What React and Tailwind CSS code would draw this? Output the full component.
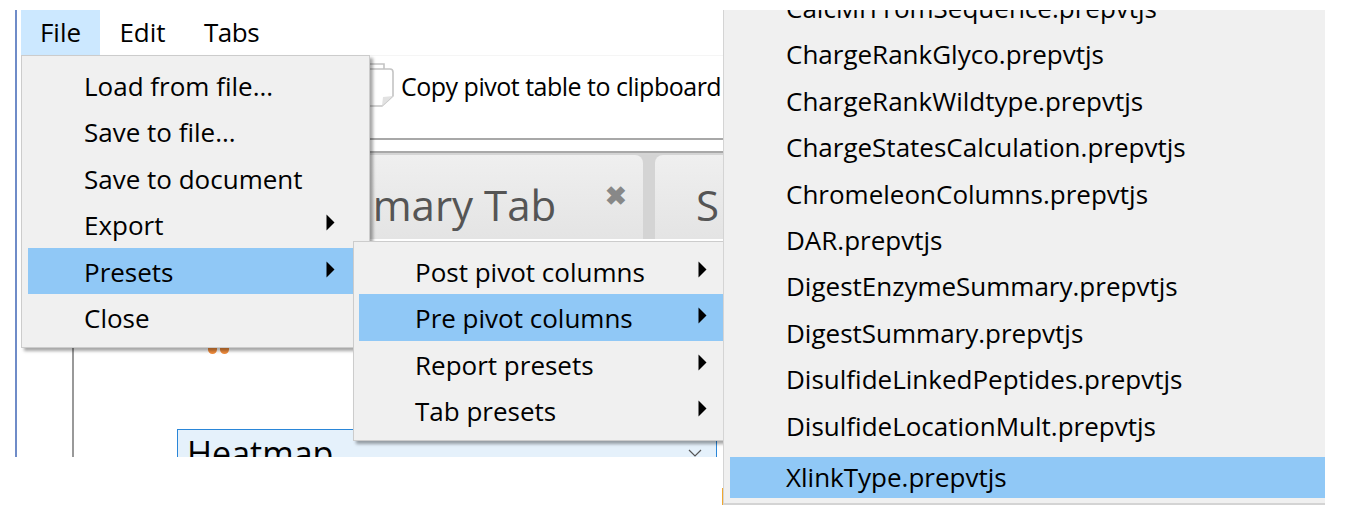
import React from "react";

const menuFont = "font-['Open_Sans',sans-serif]";

const Arrow = ({ right }) => (
  <svg width="9" height="17" viewBox="0 0 9 17" className={`absolute top-[13px] ${right}`}>
    <path d="M0.5 0.5L8.5 8.5L0.5 16.5Z" fill="#000" />
  </svg>
);

const fileItems = [
  { label: "Load from file..." },
  { label: "Save to file..." },
  { label: "Save to document" },
  { label: "Export", arrow: true },
  { label: "Presets", arrow: true, active: true },
  { label: "Close" },
];

const presetItems = [
  { label: "Post pivot columns", arrow: true },
  { label: "Pre pivot columns", arrow: true, active: true },
  { label: "Report presets", arrow: true },
  { label: "Tab presets", arrow: true },
];

const files = [
  "ChargeRankGlyco.prepvtjs",
  "ChargeRankWildtype.prepvtjs",
  "ChargeStatesCalculation.prepvtjs",
  "ChromeleonColumns.prepvtjs",
  "DAR.prepvtjs",
  "DigestEnzymeSummary.prepvtjs",
  "DigestSummary.prepvtjs",
  "DisulfideLinkedPeptides.prepvtjs",
  "DisulfideLocationMult.prepvtjs",
];

const MenuRow = ({ label, arrow, active, pad, arrowRight }) => (
  <div
    className={`relative h-[46.4px] leading-[49px] text-[26px] text-black whitespace-nowrap ${pad} ${
      active ? "bg-[#90c8f6]" : ""
    }`}
  >
    {label}
    {arrow && <Arrow right={arrowRight} />}
  </div>
);

const App = () => {
  return (
    <div className={`relative w-[1346px] h-[516px] bg-white pt-[10px] overflow-hidden ${menuFont}`}>
      <div className="ml-[15px] w-[708px] h-[447px] border-l-2 border-[#6f8cc8] overflow-hidden flex flex-col">
        {/* menu bar */}
        <div className="h-[45px] flex shrink-0 pl-[4px] text-[26px] text-black leading-[45px]">
          <div className="w-[79px] text-center bg-[#cce8ff]">File</div>
          <div className="w-[85px] text-center">Edit</div>
          <div className="w-[93px] text-center tracking-[-0.5px]">Tabs</div>
        </div>

        {/* toolbar */}
        <div className="h-[85px] ml-[56px] shrink-0 border-t border-[#f5f5f5] border-b-2 border-b-[#a8a8a8] flex pl-[296px] pt-[6px]">
          <svg width="26" height="46" viewBox="0 0 26 46" className="shrink-0">
            <path
              d="M0 7H21Q24 7 24 10V34L13 44H0"
              fill="#fff"
              stroke="#c4c4c4"
              strokeWidth="1.6"
            />
            <path d="M0 2H15V7" fill="none" stroke="#c4c4c4" strokeWidth="1.6" />
            <path d="M24 34L13 44L14 35Z" fill="#e2e2e2" />
          </svg>
          <span className="ml-[6px] mt-[8px] text-[25px] tracking-[-0.5px] text-black whitespace-nowrap leading-[32px]">
            Copy pivot table to clipboard
          </span>
        </div>

        {/* tabs */}
        <div className="mt-[11px] ml-[56px] border-t-2 border-[#a8a8a8] h-[88px] shrink-0 flex bg-[#d4d4d4]">
          <div className="relative w-[570px] shrink-0 rounded-t-[8px] mt-[2px] bg-gradient-to-b from-[#efefef] to-[#e4e4e4] text-[#555] text-[42px] leading-[100px] pl-[212px] whitespace-nowrap">
            Summary Tab
            <span className="absolute right-[16px] top-[27px] text-[#888] text-[26px] leading-[26px] font-bold">✖</span>
          </div>
          <div className="ml-[12px] flex-1 rounded-tl-[8px] mt-[2px] bg-gradient-to-b from-[#efefef] to-[#e4e4e4] text-[#555] text-[42px] leading-[100px] pl-[41px] overflow-hidden">
            S
          </div>
        </div>

        {/* body */}
        <div className="flex-1 ml-[55px] border-l-2 border-[#999]">
          <div className="w-[21px] h-[9px] ml-[134px] flex gap-[3px] mt-[106px]">
            <div className="w-[9px] h-[9px] bg-[#f08c3c] rounded-b-full" />
            <div className="w-[9px] h-[9px] bg-[#f08c3c] rounded-b-full" />
          </div>
          <div className="ml-[103px] mt-[75px] w-[540px] h-[60px] border border-[#2a86d8] bg-[#e5f1fb] relative pl-[9px] text-[34px] leading-[46px] text-black">
            Heatmap
            <svg width="14" height="8" viewBox="0 0 14 8" className="absolute right-[14px] top-[19px]">
              <path d="M1 1L7 7L13 1" fill="none" stroke="#555" strokeWidth="1.2" />
            </svg>
          </div>
        </div>
      </div>

      {/* file menu */}
      <div className="absolute left-[21px] top-[55px] w-[349px] h-[293px] bg-[#f0f0f0] border border-[#ccc] pt-[6px] pl-[6px] shadow-[3px_3px_3px_rgba(0,0,0,0.35)]">
        {fileItems.map((item) => (
          <MenuRow key={item.label} {...item} pad="pl-[56px]" arrowRight="right-[34px]" />
        ))}
      </div>

      {/* presets submenu */}
      <div className="absolute left-[353px] top-[241px] w-[371px] h-[200px] bg-[#f0f0f0] border border-[#ccc] pt-[6px] pl-[5px] shadow-[3px_3px_3px_rgba(0,0,0,0.35)]">
        {presetItems.map((item) => (
          <MenuRow key={item.label} {...item} pad="pl-[56px]" arrowRight="right-[16px]" />
        ))}
      </div>

      {/* sliver of the window behind the list */}
      <div className="absolute left-[722px] top-[488px] w-[1px] h-[17px] bg-[#f0a830]" />

      {/* file list submenu */}
      <div className="absolute left-[723px] top-[10px] w-[602px] h-[495px] bg-[#f0f0f0] border-l border-b-2 border-[#d4d4d4] pl-[6px] overflow-hidden">
        <div className="mt-[-26px]">
          <MenuRow label="CalcMrFromSequence.prepvtjs" pad="pl-[56px]" />
          {files.map((name) => (
            <MenuRow key={name} label={name} pad="pl-[56px]" />
          ))}
          <div className="mt-[9px] h-[41px] bg-[#90c8f6] pl-[56px] text-[26px] leading-[41px] text-black">
            XlinkType.prepvtjs
          </div>
        </div>
      </div>
    </div>
  );
};

export default App;
